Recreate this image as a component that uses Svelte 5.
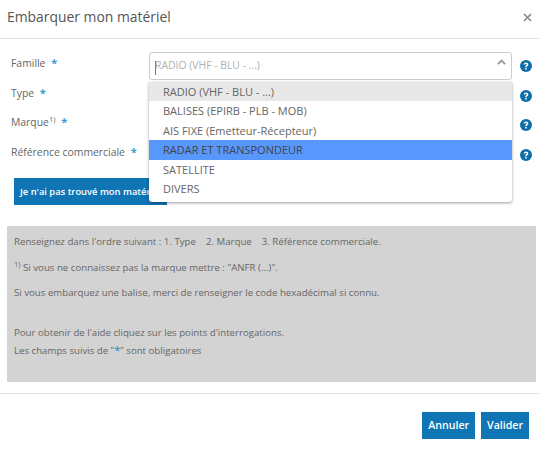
<script>
	const fields = [
		{ label: 'Famille', value: 'RADIO (VHF - BLU - ...)', open: true },
		{ label: 'Type' },
		{ label: 'Marque', sup: '1)' },
		{ label: 'Référence commerciale' }
	];
	const options = [
		'RADIO (VHF - BLU - ...)',
		'BALISES (EPIRB - PLB - MOB)',
		'AIS FIXE (Emetteur-Récepteur)',
		'RADAR ET TRANSPONDEUR',
		'SATELLITE',
		'DIVERS'
	];
	const selected = 0;
	const highlighted = 3;
</script>

<div class="modal">
	<header>
		<h4>Embarquer mon matériel</h4>
		<button class="close" aria-label="Fermer">
			<svg width="9" height="9" viewBox="0 0 9 9"><path d="M1 1l7 7M8 1l-7 7" stroke="#8a8a8a" stroke-width="1.7" fill="none" /></svg>
		</button>
	</header>

	<div class="body">
		<form>
			{#each fields as field}
				<div class="row">
					<span class="label">{field.label}{#if field.sup}<sup>{field.sup}</sup>{/if} <span class="req">*</span></span>
					<div class="control">
						{#if field.open}
							<div class="select">
								<span class="caret"></span>
								<span class="placeholder">{field.value}</span>
								<svg class="chevron" width="9" height="6" viewBox="0 0 9 6"><path d="M.8 5.2l3.7-3.7 3.7 3.7" stroke="#999" stroke-width="1.8" fill="none" /></svg>
							</div>
							<ul class="menu">
								{#each options as option, i}
									<li class:selected={i === selected} class:highlighted={i === highlighted}>{option}</li>
								{/each}
							</ul>
						{/if}
					</div>
					<svg class="help" width="12" height="12" viewBox="0 0 12 12">
						<circle cx="6" cy="6" r="6" fill="#0e6ea8" />
						<path d="M3.7 4.6c0-1.3 1.1-2 2.3-2s2.3.7 2.3 1.9c0 1.6-1.6 1.5-1.6 2.7H5.2c0-1.9 1.5-1.8 1.5-2.7 0-.4-.3-.7-.7-.7s-.8.3-.8.8z" fill="#fff" />
						<rect x="5.2" y="8" width="1.5" height="1.5" fill="#fff" />
					</svg>
				</div>
			{/each}
			<button type="button" class="btn notfound">Je n'ai pas trouvé mon matériel</button>
		</form>

		<div class="notice">
			<p>Renseignez dans l'ordre suivant : 1. Type &nbsp;&nbsp; 2. Marque &nbsp;&nbsp; 3. Référence commerciale.</p>
			<p class="note"><sup>1)</sup> Si vous ne connaissez pas la marque mettre : "ANFR (...)".</p>
			<p class="gap">Si vous embarquez une balise, merci de renseigner le code hexadécimal si connu.</p>
			<p class="tight">Pour obtenir de l'aide cliquez sur les points d'interrogations.</p>
			<p>Les champs suivis de "<span class="req">*</span>" sont obligatoires</p>
		</div>
	</div>

	<footer>
		<button class="btn">Annuler</button>
		<button class="btn">Valider</button>
	</footer>
</div>

<style>
	:global(body) {
		background: #fff;
	}

	.modal {
		width: 540px;
		height: 452px;
		font-family: "Open Sans", sans-serif;
		color: #666;
		font-size: 12px;
		box-sizing: border-box;
	}

	header {
		height: 39px;
		box-sizing: border-box;
		display: flex;
		justify-content: space-between;
		align-items: center;
		padding: 0 7px 5px;
		border-bottom: 1px solid #e5e5e5;
	}

	h4 {
		margin: 0;
		font-size: 13.9px;
		font-weight: 400;
		line-height: 20px;
		color: #555;
	}

	.close {
		background: none;
		border: 0;
		padding: 0;
		display: flex;
		margin-right: 1px;
		margin-top: 1px;
	}

	.body {
		padding: 13px 4px 0 7px;
	}

	form {
		padding-left: 4px;
	}

	.row {
		display: grid;
		grid-template-columns: 138px 363px 12px;
		height: 29.7px;
		align-items: start;
		position: relative;
	}

	.row .help {
		margin-left: 8px;
		margin-top: 8px;
	}

	.label {
		line-height: 17px;
		padding-top: 2px;
		font-size: 10.4px;
		white-space: nowrap;
	}

	sup {
		font-size: 7.5px;
		line-height: 0;
		vertical-align: 4px;
	}

	.req {
		color: #3d9bd4;
		font-size: 11px;
		font-weight: 700;
		margin-left: 3px;
	}

	.notice .req {
		margin-left: 0;
		font-size: 10px;
	}

	.control {
		position: relative;
	}

	.select {
		height: 28px;
		box-sizing: border-box;
		border: 1px solid #ccc;
		border-radius: 3px;
		padding-left: 5px;
		display: flex;
		align-items: center;
		font-size: 10.4px;
		color: #b0b0b0;
		position: relative;
	}

	.caret {
		width: 1px;
		height: 14px;
		background: #777;
		margin-right: -1px;
		margin-top: 3px;
	}

	.placeholder {
		margin-top: -2px;
	}

	.chevron {
		position: absolute;
		right: 5px;
		top: 6px;
	}

	.menu {
		position: absolute;
		z-index: 2;
		top: 30px;
		left: 0;
		width: 363px;
		margin: 0;
		padding: 0 0 4px;
		list-style: none;
		background: #fff;
		border-radius: 0 0 3px 3px;
		box-shadow: 0 1px 3px rgba(0, 0, 0, 0.4);
		font-size: 11px;
	}

	.menu li {
		height: 19.4px;
		line-height: 19.4px;
		padding-left: 14px;
	}

	.menu li.selected {
		background: #e8e8e8;
	}

	.menu li.highlighted {
		background: #5897fb;
		color: #444;
	}

	.btn {
		background: #0f75b5;
		color: #fff;
		border: 0;
		border-radius: 0;
		font-family: inherit;
		font-size: 10.6px;
		font-weight: 600;
		padding: 0 6px;
		height: 27px;
		white-space: nowrap;
	}

	.notfound {
		display: block;
		width: 153px;
		height: 27px;
		margin: 7px 0 0 3px;
		font-size: 9.4px;
		text-align: left;
		overflow: hidden;
		padding-left: 6px;
	}

	.notice {
		margin-top: 21px;
		height: 156px;
		background: #d3d3d3;
		box-sizing: border-box;
		padding: 8px 7px 0;
		font-size: 9.67px;
		color: #666;
	}

	.notice p {
		margin: 0;
		line-height: 15px;
	}

	.notice p + p {
		margin-top: 10.5px;
	}

	.notice p.note {
		margin-top: 11.5px;
	}

	.notice p.note + p.gap {
		margin-top: 9.7px;
	}

	.notice p.gap + p.tight {
		margin-top: 25px;
	}

	.notice p.tight + p {
		margin-top: 3px;
	}

	footer {
		margin-top: 11px;
		border-top: 1px solid #e5e5e5;
		display: flex;
		justify-content: flex-end;
		gap: 6px;
		padding: 18px 11px 0 0;
	}
</style>
